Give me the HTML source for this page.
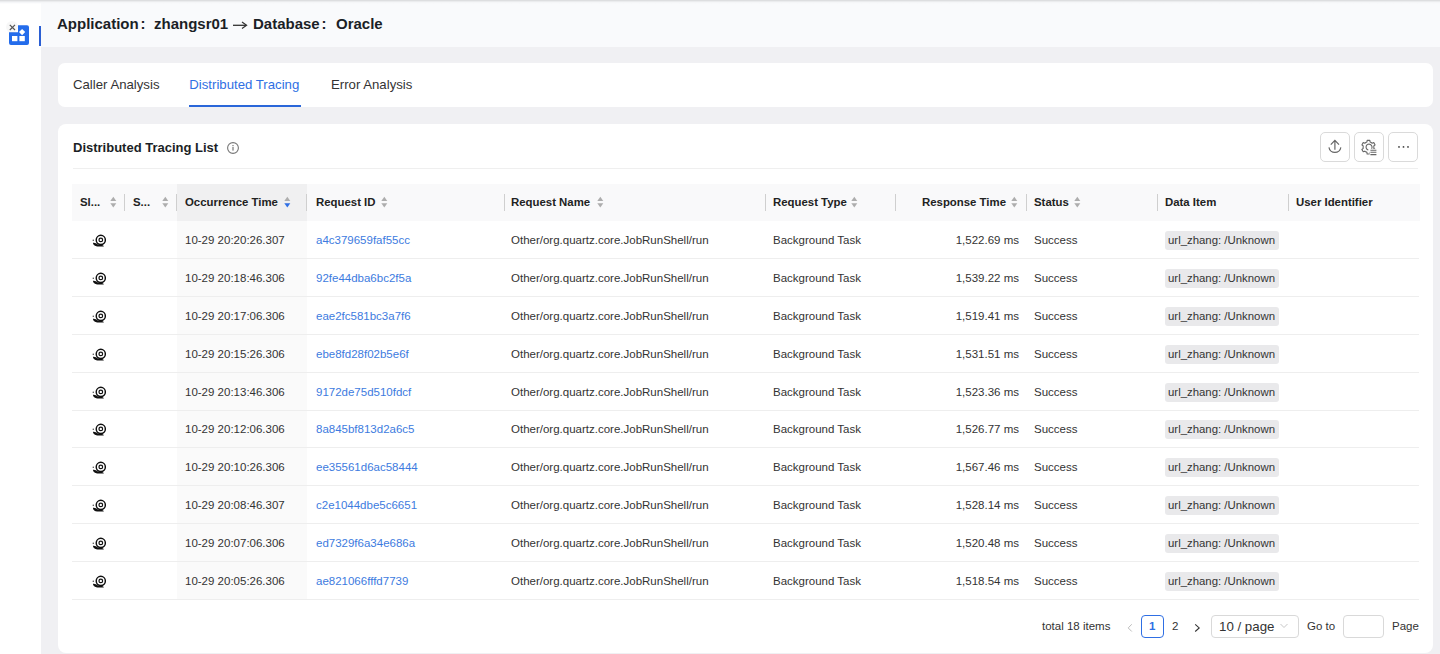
<!DOCTYPE html>
<html><head><meta charset="utf-8">
<style>
*{box-sizing:border-box;margin:0;padding:0}
html,body{width:1440px;height:654px;overflow:hidden;background:#f0f0f3;font-family:"Liberation Sans",sans-serif;color:#222;position:relative}
div{position:absolute;white-space:nowrap}
#topline{left:0;top:0;width:1440px;height:4px;background:linear-gradient(#dddee0 0px,#dddee0 1px,#eeeff1 1.6px,#f5f6f8 2.5px,rgba(249,250,252,0) 4px)}
#side{left:0;top:0;width:41px;height:654px;background:#fff}
#hdr{left:41px;top:0;width:1399px;height:47px;background:#f9fafc}
.h1{top:16px;font-size:15px;line-height:15px;font-weight:bold;color:#1b1f26}
#tabs{left:58px;top:63px;width:1374.5px;height:44px;background:#fff;border-radius:7px}
.tab{top:78px;font-size:13.2px;line-height:13px;color:#333}
.tab.act{color:#2f6fe4}
#ul{left:189px;top:105px;width:112px;height:2px;background:#2a66d9}
#card{left:58px;top:124px;width:1374.5px;height:528.8px;background:#fff;border-radius:8px}
#title{left:73px;top:141px;font-size:13px;line-height:13px;font-weight:bold;color:#1b1f26}
#divider{left:73px;top:168px;width:1345px;height:1px;background:#efefef}
.btn{top:132px;width:30px;height:30px;border:1px solid #dadada;border-radius:5px;background:#fff}
#thead{left:72px;top:184px;width:1348px;height:37px;background:#f9f9fa}
.th{top:196px;font-size:11.4px;line-height:12px;font-weight:bold;color:#222}
.sep{top:194px;width:1px;height:17px;background:#cfcfcf}
.sort{top:197px;width:6px;height:11px}
.row{left:72px;width:1348px;height:38px}
.bl{left:0;top:37px;width:1347px;height:1px;background:#eeeeee}
.sn{left:21px;top:12.6px;width:14px;height:13px;line-height:0;transform:scale(1.1);transform-origin:7.8px 5.9px}
.c{top:13px;font-size:11.5px;line-height:12px;color:#333}
.c3{left:113px}
.c4{left:244px;color:#3d7be0}
.c5{left:439px}
.c6{left:701px}
.c7{left:847px;width:100px;text-align:right}
.c8{left:962px}
.tag{left:1093px;top:10px;width:114px;height:19px;background:#e9e9eb;border-radius:3px;font-size:11.4px;line-height:19px;padding-left:3px;color:#333}
#sortbg{left:177px;top:184px;width:130px;height:416px;background:#fafafa}
.pg{top:620px;font-size:11.5px;line-height:12px;color:#333}
.box{top:615px;height:23px;border:1px solid #d9d9d9;border-radius:4px;background:#fff}
</style></head><body>
<div id="side"></div>
<div id="hdr"></div>
<div id="topline"></div>
<div class="h1" style="left:57px">Application</div><div class="h1" style="left:140.5px">:</div><div class="h1" style="left:154px">zhangsr01</div>
<svg style="position:absolute;left:232px;top:21px" width="16" height="9" viewBox="0 0 16 9"><path d="M1 4.3 H14" stroke="#333" stroke-width="1.3"/><path d="M10 1 L14.6 4.3 L10 7.6" fill="none" stroke="#333" stroke-width="1.2"/></svg>
<div class="h1" style="left:253px">Database</div><div class="h1" style="left:321.5px">:</div><div class="h1" style="left:336px">Oracle</div>
<div id="tabs"></div>
<div class="tab" style="left:73px">Caller Analysis</div>
<div class="tab act" style="left:189.3px">Distributed Tracing</div>
<div class="tab" style="left:331px">Error Analysis</div>
<div id="ul"></div>
<div id="card"></div>
<div id="title">Distributed Tracing List</div>
<svg style="position:absolute;left:226px;top:141px" width="14" height="14" viewBox="0 0 14 14"><circle cx="7" cy="7" r="5.4" fill="none" stroke="#777" stroke-width="1.1"/><rect x="6.4" y="6" width="1.2" height="3.6" fill="#777"/><rect x="6.4" y="4" width="1.2" height="1.2" fill="#777"/></svg>
<div id="divider"></div>
<div class="btn" style="left:1320px"></div>
<div class="btn" style="left:1354px"></div>
<div class="btn" style="left:1388px"></div>
<svg style="position:absolute;left:1327px;top:138px" width="16" height="17" viewBox="0 0 16 17"><path d="M1.96 9.3 A6 6 0 0 0 13.84 9.3" fill="none" stroke="#666" stroke-width="1.2"/><path d="M7.9 11.8 V2.8 M3.8 6.6 L7.9 2.4 L12 6.6" fill="none" stroke="#666" stroke-width="1.2"/></svg>
<svg style="position:absolute;left:1360px;top:138.6px" width="18" height="18" viewBox="0 0 18 18"><path d="M5.80 3.52 L6.92 3.04 L7.16 1.33 L9.84 1.33 L10.08 3.04 L11.20 3.52 L12.18 4.25 L13.78 3.61 L15.12 5.92 L13.76 6.99 L13.90 8.20 L13.76 9.41 L15.12 10.48 L13.78 12.79 L12.18 12.15 L11.20 12.88 L10.08 13.36 L9.84 15.07 L7.16 15.07 L6.92 13.36 L5.80 12.88 L4.82 12.15 L3.22 12.79 L1.88 10.48 L3.24 9.41 L3.10 8.20 L3.24 6.99 L1.88 5.92 L3.22 3.61 L4.82 4.25Z" fill="none" stroke="#666" stroke-width="1.1" stroke-linejoin="round"/><rect x="9.6" y="10" width="8" height="8" fill="#fff"/><path d="M11.6 9.7 A3 3 0 1 0 8.3 11" fill="none" stroke="#666" stroke-width="1.1"/><path d="M10.4 11.2 h6 M10.4 13.3 h6 M10.4 15.6 h6" stroke="#666" stroke-width="1.1"/></svg>
<svg style="position:absolute;left:1396px;top:145px" width="15" height="4" viewBox="0 0 15 4"><circle cx="3" cy="1.9" r="0.9" fill="#444"/><circle cx="7.5" cy="1.9" r="0.9" fill="#444"/><circle cx="12" cy="1.9" r="0.9" fill="#444"/></svg>
<div id="sortbg"></div>
<div id="thead"></div>
<div id="sortbg2" style="left:177px;top:184px;width:130px;height:37px;background:#f0f0f1"></div>
<div class="th" style="left:80px">Sl...</div>
<div class="sep" style="left:124px"></div>
<div class="th" style="left:133px">S...</div>
<div class="sep" style="left:176px"></div>
<div class="th" style="left:185px">Occurrence Time</div>
<div class="sep" style="left:306px"></div>
<div class="th" style="left:316px">Request ID</div>
<div class="sep" style="left:504px"></div>
<div class="th" style="left:511px">Request Name</div>
<div class="sep" style="left:765px"></div>
<div class="th" style="left:773px">Request Type</div>
<div class="sep" style="left:895px"></div>
<div class="th" style="left:922px">Response Time</div>
<div class="sep" style="left:1026px"></div>
<div class="th" style="left:1034px">Status</div>
<div class="sep" style="left:1157px"></div>
<div class="th" style="left:1165px">Data Item</div>
<div class="sep" style="left:1288px"></div>
<div class="th" style="left:1296px">User Identifier</div>
<svg style="position:absolute;left:109.5px;top:196px" width="8" height="12" viewBox="0 0 8 12"><path d="M0.3 5 L3.3 0.8 L6.3 5Z" fill="#adadad"/><path d="M0.3 7.2 L3.3 11.4 L6.3 7.2Z" fill="#adadad"/></svg>
<svg style="position:absolute;left:161.5px;top:196px" width="8" height="12" viewBox="0 0 8 12"><path d="M0.3 5 L3.3 0.8 L6.3 5Z" fill="#adadad"/><path d="M0.3 7.2 L3.3 11.4 L6.3 7.2Z" fill="#adadad"/></svg>
<svg style="position:absolute;left:283.5px;top:196px" width="8" height="12" viewBox="0 0 8 12"><path d="M0.3 5 L3.3 0.8 L6.3 5Z" fill="#adadad"/><path d="M0.3 7.2 L3.3 11.4 L6.3 7.2Z" fill="#2f6fe4"/></svg>
<svg style="position:absolute;left:380.8px;top:196px" width="8" height="12" viewBox="0 0 8 12"><path d="M0.3 5 L3.3 0.8 L6.3 5Z" fill="#adadad"/><path d="M0.3 7.2 L3.3 11.4 L6.3 7.2Z" fill="#adadad"/></svg>
<svg style="position:absolute;left:596.5px;top:196px" width="8" height="12" viewBox="0 0 8 12"><path d="M0.3 5 L3.3 0.8 L6.3 5Z" fill="#adadad"/><path d="M0.3 7.2 L3.3 11.4 L6.3 7.2Z" fill="#adadad"/></svg>
<svg style="position:absolute;left:850.5px;top:196px" width="8" height="12" viewBox="0 0 8 12"><path d="M0.3 5 L3.3 0.8 L6.3 5Z" fill="#adadad"/><path d="M0.3 7.2 L3.3 11.4 L6.3 7.2Z" fill="#adadad"/></svg>
<svg style="position:absolute;left:1011.2px;top:196px" width="8" height="12" viewBox="0 0 8 12"><path d="M0.3 5 L3.3 0.8 L6.3 5Z" fill="#adadad"/><path d="M0.3 7.2 L3.3 11.4 L6.3 7.2Z" fill="#adadad"/></svg>
<svg style="position:absolute;left:1073.8px;top:196px" width="8" height="12" viewBox="0 0 8 12"><path d="M0.3 5 L3.3 0.8 L6.3 5Z" fill="#adadad"/><path d="M0.3 7.2 L3.3 11.4 L6.3 7.2Z" fill="#adadad"/></svg>
<div class="row" style="top:221px"><div class="bl"></div><div class="sn"><svg width="14" height="13" viewBox="0 0 14 13"><circle cx="7.8" cy="5.9" r="4.15" fill="none" stroke="#111" stroke-width="1.35"/><circle cx="7.8" cy="5.9" r="1.65" fill="none" stroke="#111" stroke-width="1.15"/><path d="M0.6 8.6 Q1 11.6 4.6 11.9 L10.6 11.9 Q10.3 11 9 10.6 Q5.2 10.8 3.8 9.2 Q2.2 8.4 0.6 8.6Z" fill="#111"/><circle cx="0.9" cy="6.2" r="0.65" fill="#333"/></svg></div><div class="c c3">10-29 20:20:26.307</div><div class="c c4">a4c379659faf55cc</div><div class="c c5">Other/org.quartz.core.JobRunShell/run</div><div class="c c6">Background Task</div><div class="c c7">1,522.69 ms</div><div class="c c8">Success</div><div class="tag">url_zhang: /Unknown</div></div>
<div class="row" style="top:259px"><div class="bl"></div><div class="sn"><svg width="14" height="13" viewBox="0 0 14 13"><circle cx="7.8" cy="5.9" r="4.15" fill="none" stroke="#111" stroke-width="1.35"/><circle cx="7.8" cy="5.9" r="1.65" fill="none" stroke="#111" stroke-width="1.15"/><path d="M0.6 8.6 Q1 11.6 4.6 11.9 L10.6 11.9 Q10.3 11 9 10.6 Q5.2 10.8 3.8 9.2 Q2.2 8.4 0.6 8.6Z" fill="#111"/><circle cx="0.9" cy="6.2" r="0.65" fill="#333"/></svg></div><div class="c c3">10-29 20:18:46.306</div><div class="c c4">92fe44dba6bc2f5a</div><div class="c c5">Other/org.quartz.core.JobRunShell/run</div><div class="c c6">Background Task</div><div class="c c7">1,539.22 ms</div><div class="c c8">Success</div><div class="tag">url_zhang: /Unknown</div></div>
<div class="row" style="top:297px"><div class="bl"></div><div class="sn"><svg width="14" height="13" viewBox="0 0 14 13"><circle cx="7.8" cy="5.9" r="4.15" fill="none" stroke="#111" stroke-width="1.35"/><circle cx="7.8" cy="5.9" r="1.65" fill="none" stroke="#111" stroke-width="1.15"/><path d="M0.6 8.6 Q1 11.6 4.6 11.9 L10.6 11.9 Q10.3 11 9 10.6 Q5.2 10.8 3.8 9.2 Q2.2 8.4 0.6 8.6Z" fill="#111"/><circle cx="0.9" cy="6.2" r="0.65" fill="#333"/></svg></div><div class="c c3">10-29 20:17:06.306</div><div class="c c4">eae2fc581bc3a7f6</div><div class="c c5">Other/org.quartz.core.JobRunShell/run</div><div class="c c6">Background Task</div><div class="c c7">1,519.41 ms</div><div class="c c8">Success</div><div class="tag">url_zhang: /Unknown</div></div>
<div class="row" style="top:335px"><div class="bl"></div><div class="sn"><svg width="14" height="13" viewBox="0 0 14 13"><circle cx="7.8" cy="5.9" r="4.15" fill="none" stroke="#111" stroke-width="1.35"/><circle cx="7.8" cy="5.9" r="1.65" fill="none" stroke="#111" stroke-width="1.15"/><path d="M0.6 8.6 Q1 11.6 4.6 11.9 L10.6 11.9 Q10.3 11 9 10.6 Q5.2 10.8 3.8 9.2 Q2.2 8.4 0.6 8.6Z" fill="#111"/><circle cx="0.9" cy="6.2" r="0.65" fill="#333"/></svg></div><div class="c c3">10-29 20:15:26.306</div><div class="c c4">ebe8fd28f02b5e6f</div><div class="c c5">Other/org.quartz.core.JobRunShell/run</div><div class="c c6">Background Task</div><div class="c c7">1,531.51 ms</div><div class="c c8">Success</div><div class="tag">url_zhang: /Unknown</div></div>
<div class="row" style="top:373px"><div class="bl"></div><div class="sn"><svg width="14" height="13" viewBox="0 0 14 13"><circle cx="7.8" cy="5.9" r="4.15" fill="none" stroke="#111" stroke-width="1.35"/><circle cx="7.8" cy="5.9" r="1.65" fill="none" stroke="#111" stroke-width="1.15"/><path d="M0.6 8.6 Q1 11.6 4.6 11.9 L10.6 11.9 Q10.3 11 9 10.6 Q5.2 10.8 3.8 9.2 Q2.2 8.4 0.6 8.6Z" fill="#111"/><circle cx="0.9" cy="6.2" r="0.65" fill="#333"/></svg></div><div class="c c3">10-29 20:13:46.306</div><div class="c c4">9172de75d510fdcf</div><div class="c c5">Other/org.quartz.core.JobRunShell/run</div><div class="c c6">Background Task</div><div class="c c7">1,523.36 ms</div><div class="c c8">Success</div><div class="tag">url_zhang: /Unknown</div></div>
<div class="row" style="top:410px"><div class="bl"></div><div class="sn"><svg width="14" height="13" viewBox="0 0 14 13"><circle cx="7.8" cy="5.9" r="4.15" fill="none" stroke="#111" stroke-width="1.35"/><circle cx="7.8" cy="5.9" r="1.65" fill="none" stroke="#111" stroke-width="1.15"/><path d="M0.6 8.6 Q1 11.6 4.6 11.9 L10.6 11.9 Q10.3 11 9 10.6 Q5.2 10.8 3.8 9.2 Q2.2 8.4 0.6 8.6Z" fill="#111"/><circle cx="0.9" cy="6.2" r="0.65" fill="#333"/></svg></div><div class="c c3">10-29 20:12:06.306</div><div class="c c4">8a845bf813d2a6c5</div><div class="c c5">Other/org.quartz.core.JobRunShell/run</div><div class="c c6">Background Task</div><div class="c c7">1,526.77 ms</div><div class="c c8">Success</div><div class="tag">url_zhang: /Unknown</div></div>
<div class="row" style="top:448px"><div class="bl"></div><div class="sn"><svg width="14" height="13" viewBox="0 0 14 13"><circle cx="7.8" cy="5.9" r="4.15" fill="none" stroke="#111" stroke-width="1.35"/><circle cx="7.8" cy="5.9" r="1.65" fill="none" stroke="#111" stroke-width="1.15"/><path d="M0.6 8.6 Q1 11.6 4.6 11.9 L10.6 11.9 Q10.3 11 9 10.6 Q5.2 10.8 3.8 9.2 Q2.2 8.4 0.6 8.6Z" fill="#111"/><circle cx="0.9" cy="6.2" r="0.65" fill="#333"/></svg></div><div class="c c3">10-29 20:10:26.306</div><div class="c c4">ee35561d6ac58444</div><div class="c c5">Other/org.quartz.core.JobRunShell/run</div><div class="c c6">Background Task</div><div class="c c7">1,567.46 ms</div><div class="c c8">Success</div><div class="tag">url_zhang: /Unknown</div></div>
<div class="row" style="top:486px"><div class="bl"></div><div class="sn"><svg width="14" height="13" viewBox="0 0 14 13"><circle cx="7.8" cy="5.9" r="4.15" fill="none" stroke="#111" stroke-width="1.35"/><circle cx="7.8" cy="5.9" r="1.65" fill="none" stroke="#111" stroke-width="1.15"/><path d="M0.6 8.6 Q1 11.6 4.6 11.9 L10.6 11.9 Q10.3 11 9 10.6 Q5.2 10.8 3.8 9.2 Q2.2 8.4 0.6 8.6Z" fill="#111"/><circle cx="0.9" cy="6.2" r="0.65" fill="#333"/></svg></div><div class="c c3">10-29 20:08:46.307</div><div class="c c4">c2e1044dbe5c6651</div><div class="c c5">Other/org.quartz.core.JobRunShell/run</div><div class="c c6">Background Task</div><div class="c c7">1,528.14 ms</div><div class="c c8">Success</div><div class="tag">url_zhang: /Unknown</div></div>
<div class="row" style="top:524px"><div class="bl"></div><div class="sn"><svg width="14" height="13" viewBox="0 0 14 13"><circle cx="7.8" cy="5.9" r="4.15" fill="none" stroke="#111" stroke-width="1.35"/><circle cx="7.8" cy="5.9" r="1.65" fill="none" stroke="#111" stroke-width="1.15"/><path d="M0.6 8.6 Q1 11.6 4.6 11.9 L10.6 11.9 Q10.3 11 9 10.6 Q5.2 10.8 3.8 9.2 Q2.2 8.4 0.6 8.6Z" fill="#111"/><circle cx="0.9" cy="6.2" r="0.65" fill="#333"/></svg></div><div class="c c3">10-29 20:07:06.306</div><div class="c c4">ed7329f6a34e686a</div><div class="c c5">Other/org.quartz.core.JobRunShell/run</div><div class="c c6">Background Task</div><div class="c c7">1,520.48 ms</div><div class="c c8">Success</div><div class="tag">url_zhang: /Unknown</div></div>
<div class="row" style="top:562px"><div class="bl"></div><div class="sn"><svg width="14" height="13" viewBox="0 0 14 13"><circle cx="7.8" cy="5.9" r="4.15" fill="none" stroke="#111" stroke-width="1.35"/><circle cx="7.8" cy="5.9" r="1.65" fill="none" stroke="#111" stroke-width="1.15"/><path d="M0.6 8.6 Q1 11.6 4.6 11.9 L10.6 11.9 Q10.3 11 9 10.6 Q5.2 10.8 3.8 9.2 Q2.2 8.4 0.6 8.6Z" fill="#111"/><circle cx="0.9" cy="6.2" r="0.65" fill="#333"/></svg></div><div class="c c3">10-29 20:05:26.306</div><div class="c c4">ae821066fffd7739</div><div class="c c5">Other/org.quartz.core.JobRunShell/run</div><div class="c c6">Background Task</div><div class="c c7">1,518.54 ms</div><div class="c c8">Success</div><div class="tag">url_zhang: /Unknown</div></div><div class="pg" style="left:1042px">total 18 items</div>
<svg style="position:absolute;left:1126px;top:623px" width="8" height="10" viewBox="0 0 8 10"><path d="M5.8 1.3 L2.2 4.9 L5.8 8.5" fill="none" stroke="#bcbcbc" stroke-width="1"/></svg>
<div class="box" style="left:1141px;width:23px;border-color:#2f6fe4"></div>
<div class="pg" style="left:1149px;color:#2f6fe4;font-weight:bold">1</div>
<div class="pg" style="left:1172px">2</div>
<svg style="position:absolute;left:1194px;top:623px" width="8" height="10" viewBox="0 0 8 10"><path d="M1.2 1.3 L5.2 4.9 L1.2 8.5" fill="none" stroke="#333" stroke-width="1.1"/></svg>
<div class="box" style="left:1211px;width:88px"></div>
<div class="pg" style="left:1219px;top:620px;font-size:13.3px;line-height:13px">10 / page</div>
<svg style="position:absolute;left:1279px;top:622px" width="10" height="8" viewBox="0 0 10 8"><path d="M1.5 2 L5 5.5 L8.5 2" fill="none" stroke="#c8c8c8" stroke-width="1"/></svg>
<div class="pg" style="left:1307px">Go to</div>
<div class="box" style="left:1343px;width:41px"></div>
<div class="pg" style="left:1392px">Page</div>
<svg style="position:absolute;left:9px;top:25px" width="20" height="21" viewBox="0 0 20 21"><path d="M9 0.3 H18 Q20 0.3 20 2.3 V18 Q20 20 18 20 H2 Q0 20 0 18 V7.3 L9 7.3Z" fill="#246ceb"/><rect x="3" y="11" width="5.4" height="5.2" fill="#fff"/><rect x="10.4" y="11" width="5.4" height="5.2" fill="#fff"/><path d="M13.1 4 L16.2 7.1 L13.1 10.2 L10 7.1Z" fill="#fff"/></svg>
<div style="left:6px;top:21px;width:12px;height:12px;border-radius:6px;background:rgba(0,0,0,0.03)"></div><svg style="position:absolute;left:9px;top:24px" width="7" height="7" viewBox="0 0 7 7"><path d="M0.8 0.8 L6 6 M6 0.8 L0.8 6" stroke="#555" stroke-width="1.2"/></svg>
<div style="left:39px;top:26px;width:2px;height:20px;background:#2b5fd3"></div>
</body></html>
